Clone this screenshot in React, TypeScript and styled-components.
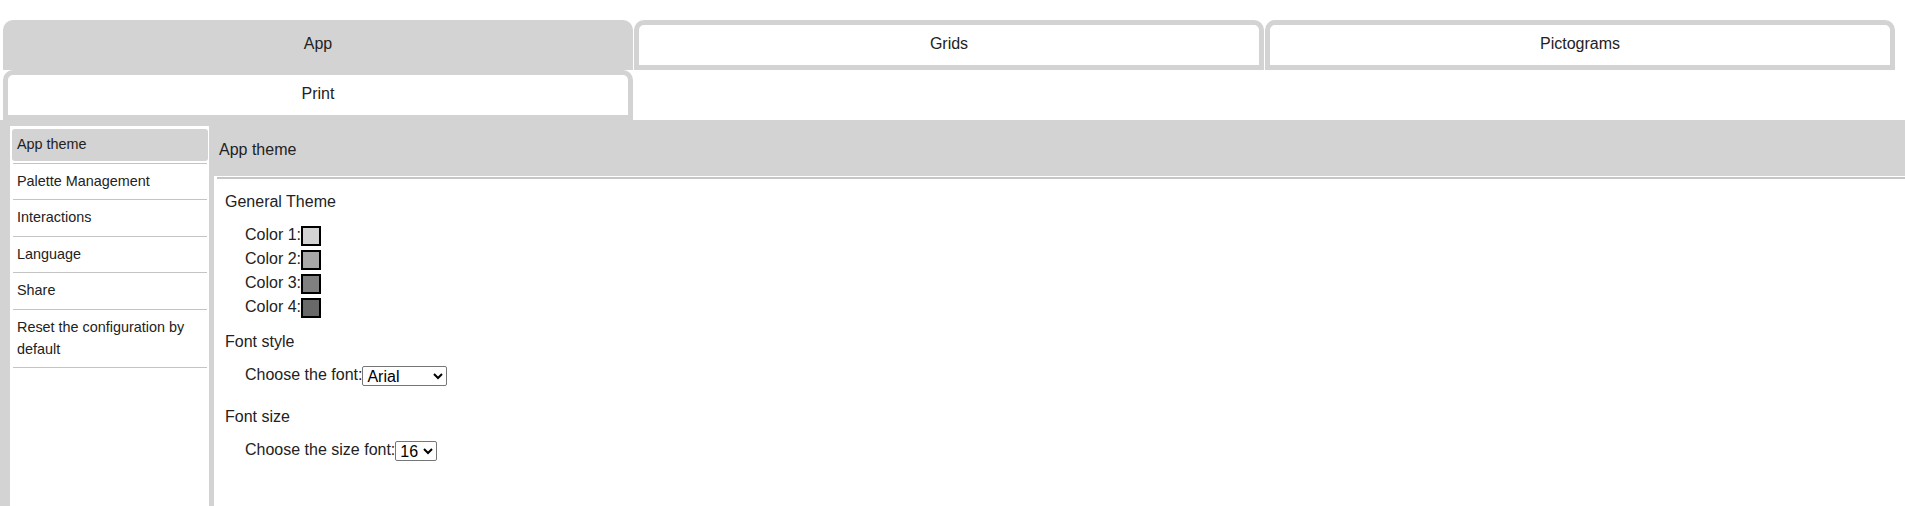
import React from "react";
import styled, { createGlobalStyle } from "styled-components";

const GlobalStyle = createGlobalStyle`
  html, body {
    margin: 0;
    padding: 0;
    height: 100%;
    overflow: hidden;
    background: #fff;
  }
  body {
    font-family: "Liberation Sans", Arial, sans-serif;
    color: #222;
  }
  #root {
    height: 100%;
  }
`;

const Page = styled.div`
  display: flex;
  flex-direction: column;
  height: 100%;
`;

const TabList = styled.div`
  display: flex;
  flex-wrap: wrap;
  column-gap: 1px;
  padding: 20px 0 0 3px;
`;

const Tab = styled.div<{ $active?: boolean }>`
  box-sizing: border-box;
  width: 630px;
  height: 50px;
  padding-bottom: 2px;
  border: 5px solid #d3d3d3;
  border-radius: 10px 10px 0 0;
  background: ${(p) => (p.$active ? "#d3d3d3" : "#fff")};
  display: flex;
  align-items: center;
  justify-content: center;
  font-size: 16px;
  color: #222;
  cursor: pointer;
`;

const Panel = styled.div`
  flex: 1;
  min-height: 0;
  display: flex;
  gap: 5px;
  background: #d3d3d3;
  padding: 6px 0 0 10px;
`;

const Sidebar = styled.nav`
  flex-shrink: 0;
  width: 199px;
  box-sizing: border-box;
  background: #fff;
  padding: 1px 2px 0 3px;
`;

const SideItem = styled.div`
  padding: 2px 0 1.5px;
  border-bottom: 1px solid #c4c4c4;
`;

const SideLabel = styled.div<{ $active?: boolean }>`
  margin: 0 -1px;
  padding: 4px 5px 6px;
  line-height: 22px;
  font-size: 14.4px;
  border-radius: 3px;
  background: ${(p) => (p.$active ? "#d3d3d3" : "transparent")};
  cursor: pointer;
`;

const Main = styled.main`
  flex: 1;
  min-width: 0;
  display: flex;
  flex-direction: column;
`;

const MainHeader = styled.div`
  height: 50px;
  box-sizing: border-box;
  line-height: 48px;
  padding: 0 0 2px 5px;
  font-size: 16px;
`;

const Content = styled.div`
  flex: 1;
  background: #fff;
  padding-top: 1px;
`;

const Divider = styled.div`
  height: 2px;
  margin-left: 3px;
  background: #c6c6c6;
`;

const Body = styled.div`
  padding: 13px 11px;
`;

const Section = styled.section<{ $after?: number }>`
  margin-bottom: ${(p) => p.$after ?? 12}px;
`;

const SectionTitle = styled.div`
  font-size: 16px;
  line-height: 20px;
  margin-bottom: 12px;
`;

const Row = styled.div`
  display: flex;
  align-items: center;
  height: 24px;
  padding-left: 20px;
  font-size: 16px;
  white-space: nowrap;
`;

const RowText = styled.span`
  position: relative;
  top: -1px;
`;

const Swatch = styled.span<{ $color: string }>`
  display: inline-block;
  width: 20px;
  height: 20px;
  box-sizing: border-box;
  border: 2px solid #000;
  background: ${(p) => p.$color};
`;

const Select = styled.select<{ $width: number }>`
  width: ${(p) => p.$width}px;
  height: 20px;
  box-sizing: border-box;
  font-family: "Liberation Sans", Arial, sans-serif;
  font-size: 16px;
  color: #000;
  background: #fff;
  border: 1px solid #767676;
  border-radius: 2px;
  padding: 0;
`;

const tabs = ["App", "Grids", "Pictograms", "Print"];
const menu = [
  "App theme",
  "Palette Management",
  "Interactions",
  "Language",
  "Share",
  "Reset the configuration by default",
];
const colors = ["#d3d3d3", "#a9a9a9", "#808080", "#696969"];

export default function App() {
  return (
    <>
      <GlobalStyle />
      <Page>
        <TabList>
          {tabs.map((t, i) => (
            <Tab key={t} $active={i === 0}>
              {t}
            </Tab>
          ))}
        </TabList>
        <Panel>
          <Sidebar>
            {menu.map((m, i) => (
              <SideItem key={m}>
                <SideLabel $active={i === 0}>{m}</SideLabel>
              </SideItem>
            ))}
          </Sidebar>
          <Main>
            <MainHeader>App theme</MainHeader>
            <Content>
              <Divider />
              <Body>
                <Section>
                  <SectionTitle>General Theme</SectionTitle>
                  {colors.map((c, i) => (
                    <Row key={c}>
                      <RowText>Color {i + 1}:</RowText>
                      <Swatch $color={c} />
                    </Row>
                  ))}
                </Section>
                <Section $after={19}>
                  <SectionTitle>Font style</SectionTitle>
                  <Row>
                    <RowText>Choose the font:</RowText>
                    <Select $width={85} defaultValue="Arial">
                      <option>Arial</option>
                      <option>Verdana</option>
                      <option>Times New Roman</option>
                    </Select>
                  </Row>
                </Section>
                <Section>
                  <SectionTitle>Font size</SectionTitle>
                  <Row>
                    <RowText>Choose the size font:</RowText>
                    <Select $width={42} defaultValue="16">
                      <option>12</option>
                      <option>14</option>
                      <option>16</option>
                      <option>18</option>
                    </Select>
                  </Row>
                </Section>
              </Body>
            </Content>
          </Main>
        </Panel>
      </Page>
    </>
  );
}
